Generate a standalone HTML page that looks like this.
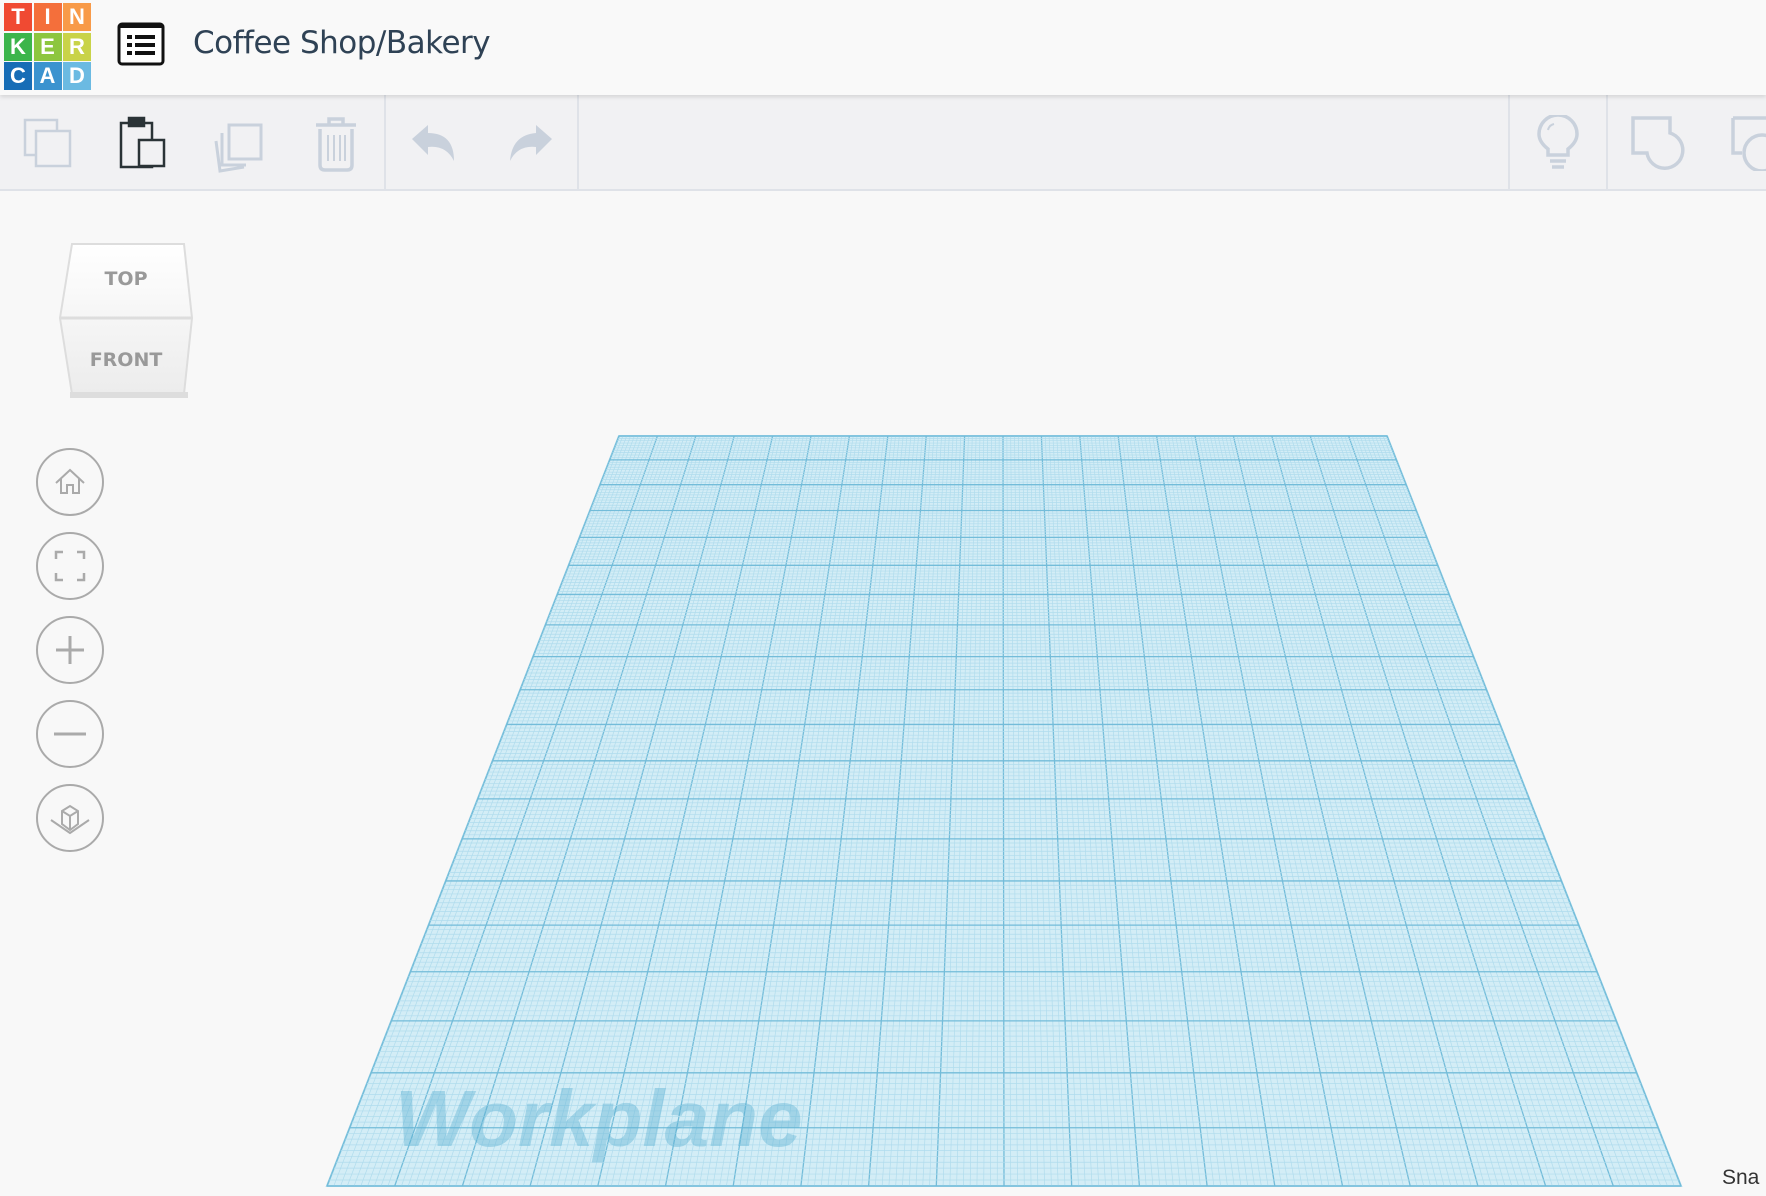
<!DOCTYPE html>
<html><head><meta charset="utf-8"><style>
*{margin:0;padding:0;box-sizing:border-box}
body{width:1766px;height:1196px;overflow:hidden;background:#f8f8f8;font-family:"Liberation Sans",sans-serif;position:relative}
#hdr{position:absolute;left:0;top:0;width:1766px;height:95px;background:#f9f9f9;box-shadow:0 2px 4px rgba(0,0,0,.12);z-index:2}
.logo{position:absolute;left:4px;top:3px;width:87px;height:87px;display:grid;grid-template-columns:repeat(3,28px);grid-template-rows:repeat(3,28px);gap:1.5px}
.logo div{color:#fff;font-weight:bold;font-size:22px;display:flex;align-items:center;justify-content:center}
#title{position:absolute;left:193px;top:25px;font-size:31px;color:#2f4255;font-family:"DejaVu Sans","Liberation Sans",sans-serif;letter-spacing:-0.5px}
#tb{position:absolute;left:0;top:95px;width:1766px;height:96px;background:#f1f1f3;border-bottom:2px solid #dfe2e8}
.sep{position:absolute;top:0;width:2px;height:94px;background:#dfe2e8}
svg{position:absolute}
#sna{position:absolute;left:1722px;top:1166px;font-size:21px;color:#333}
</style></head><body>
<div id="hdr">
 <div class="logo">
  <div style="background:#f04a32">T</div><div style="background:#f46f3b">I</div><div style="background:#f89a48">N</div>
  <div style="background:#3cb54b">K</div><div style="background:#8dc63f">E</div><div style="background:#c9d348">R</div>
  <div style="background:#176db6">C</div><div style="background:#3b93cf">A</div><div style="background:#6bbae2">D</div>
 </div>
 <svg style="left:117px;top:22px" width="48" height="44" viewBox="0 0 48 44"><rect x="2" y="2" width="44" height="40" rx="3" fill="#fff" stroke="#111" stroke-width="3"/><rect x="2" y="2" width="44" height="4" fill="#111"/><g fill="#111"><rect x="10" y="13" width="5" height="4"/><rect x="18" y="13" width="20" height="4"/><rect x="10" y="21" width="5" height="4"/><rect x="18" y="21" width="20" height="4"/><rect x="10" y="29" width="5" height="4"/><rect x="18" y="29" width="20" height="4"/></g></svg>
 <div id="title">Coffee Shop/Bakery</div>
</div>
<div id="tb">
 <div class="sep" style="left:384px"></div><div class="sep" style="left:577px"></div><div class="sep" style="left:1508px"></div><div class="sep" style="left:1606px"></div>
 <svg style="left:22px;top:22px" width="52" height="52" viewBox="0 0 52 52" fill="none" stroke="#c9d1dc" stroke-width="2.5"><rect x="3" y="3" width="32" height="35"/><rect x="14" y="14" width="34" height="35" fill="#f1f1f3"/></svg>
 <svg style="left:118px;top:20px" width="50" height="56" viewBox="0 0 50 56" fill="none" stroke="#2a3336" stroke-width="2.5"><rect x="3" y="8" width="31" height="44"/><rect x="11" y="3" width="15" height="8" fill="#2a3336"/><rect x="21" y="25" width="25" height="26" fill="#f1f1f3"/></svg>
 <svg style="left:212px;top:20px" width="56" height="60" viewBox="0 0 56 60" fill="none" stroke="#c9d1dc" stroke-width="3"><path d="M4 26 L8 56 L32 52"/><path d="M10 18 V50 H34"/><rect x="17" y="10" width="32" height="34" fill="#f1f1f3"/></svg>
 <svg style="left:314px;top:20px" width="44" height="58" viewBox="0 0 44 58" fill="none" stroke="#c9d1dc" stroke-width="3.5"><path d="M2 10 H42"/><path d="M15 9 V4 H29 V9"/><path d="M6 14 V50 Q6 55 11 55 H33 Q38 55 38 50 V14"/><path d="M14 20 V46 M20 20 V46 M26 20 V46 M31 20 V46" stroke-width="2"/></svg>
 <svg style="left:410px;top:28px" width="50" height="40" viewBox="0 0 50 40" fill="#c9d1dc"><path d="M2 16 L18 2 V10 Q44 10 44 38 Q36 22 18 24 V32 Z"/></svg>
 <svg style="left:504px;top:28px" width="50" height="40" viewBox="0 0 50 40" fill="#c9d1dc"><path d="M48 16 L32 2 V10 Q8 12 6 38 Q14 22 32 24 V32 Z"/></svg>
 <svg style="left:1536px;top:20px" width="44" height="60" viewBox="0 0 44 60" fill="none" stroke="#c9d1dc" stroke-width="3.5"><path d="M12 40 V34 Q3 27 3 19 A19 19 0 0 1 41 19 Q41 27 32 34 V40 Z"/><path d="M14 46 H30 M16 52 H28"/><path d="M12 15 A8 8 0 0 1 18 9" stroke-width="2"/></svg>
 <svg style="left:1630px;top:20px" width="56" height="56" viewBox="0 0 56 56" fill="none" stroke="#c9d1dc" stroke-width="3.5"><path d="M3 3 H40 V18 A18 18 0 1 1 17 38 H3 Z"/></svg>
 <svg style="left:1730px;top:20px" width="36" height="56" viewBox="0 0 36 56" fill="none" stroke="#c9d1dc" stroke-width="3.5"><path d="M3 3 H40 M3 3 V38 H12"/><circle cx="32" cy="38" r="18"/></svg>
</div>
<svg style="left:58px;top:238px" width="140" height="164" viewBox="0 0 140 164">
 <defs><linearGradient id="g" x1="0" y1="0" x2="0" y2="1"><stop offset="0" stop-color="#fff"/><stop offset="1" stop-color="#ececec"/></linearGradient></defs>
 <path d="M14 6 H126 L134 80 L126 156 H14 L2 80 Z" fill="url(#g)" stroke="#ddd" stroke-width="2"/>
 <path d="M2 80 H134" stroke="#ddd" stroke-width="3"/>
 <rect x="12" y="154" width="118" height="6" fill="#ddd"/>
 <text x="68" y="47" text-anchor="middle" font-family="DejaVu Sans" font-weight="bold" font-size="19" fill="#999">TOP</text>
 <text x="68" y="128" text-anchor="middle" font-family="DejaVu Sans" font-weight="bold" font-size="19" fill="#999">FRONT</text>
</svg>
<svg style="left:34px;top:446px" width="74" height="410" viewBox="0 0 74 410" fill="none" stroke="#aaa" stroke-width="2">
 <circle cx="36" cy="36" r="33"/><circle cx="36" cy="120" r="33"/><circle cx="36" cy="204" r="33"/><circle cx="36" cy="288" r="33"/><circle cx="36" cy="372" r="33"/>
 <path d="M22 37 L36 24 L50 37 M27 33 V47 H33 V39 H39 V47 H45 V33"/>
 <path d="M22 113 V106 H29 M43 106 H50 V113 M22 127 V134 H29 M43 134 H50 V127" stroke-width="2.5"/>
 <path d="M36 190 V218 M22 204 H50" stroke-width="3"/>
 <path d="M20 288 H52" stroke-width="3"/>
 <path d="M28 365 L36 360 L44 365 V378 L36 384 L28 378 Z M28 365 L36 370 L44 365 M36 370 V384 M17 374 L36 387 L55 374"/>
</svg>
<svg id="wp" style="left:0;top:0" width="1766" height="1196"></svg>
<div id="sna">Sna</div>
<script>
(function(){
var s=document.getElementById('wp');
var T=436,B=1186,tl=619,tr=1387,bl=327,br=1681,k=1.6;
function L(y){var t=(y-T)/(B-T);return [tl+(bl-tl)*t,tr+(br-tr)*t];}
function P(t){return t/(k-(k-1)*t);}
var h='<polygon points="'+tl+','+T+' '+tr+','+T+' '+br+','+B+' '+bl+','+B+'" fill="#d3edf6" stroke="#9fd4e8" stroke-width="2"/>';
var m='';var N=200;
for(var i=0;i<=N;i++){var f=i/N;var xt=tl+(tr-tl)*f,xb=bl+(br-bl)*f;
 var maj=i%10==0;m+='<line x1="'+xt+'" y1="'+T+'" x2="'+xb+'" y2="'+B+'" stroke="'+(maj?'#73bcd9':'#b0dced')+'" stroke-width="'+(maj?1.3:0.7)+'"/>';}
for(var j=0;j<=N;j++){var y=T+(B-T)*P(j/N);var e=L(y);var maj=j%10==0;
 m+='<line x1="'+e[0]+'" y1="'+y+'" x2="'+e[1]+'" y2="'+y+'" stroke="'+(maj?'#73bcd9':'#b0dced')+'" stroke-width="'+(maj?1.3:0.7)+'"/>';}
h+=m;
h+='<text x="395" y="1146" font-family="Liberation Sans" font-weight="bold" font-style="italic" font-size="80" fill="#5aaed3" fill-opacity="0.4">Workplane</text>';
s.innerHTML=h;
})();
</script>
</body></html>
